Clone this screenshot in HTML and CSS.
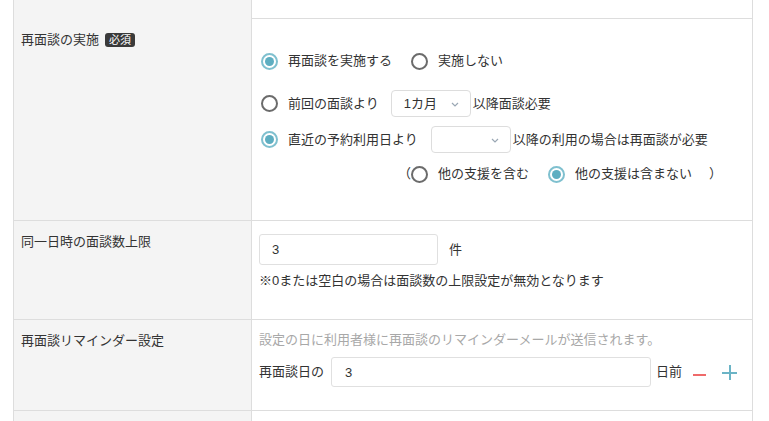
FILE: index.html
```html
<!DOCTYPE html>
<html lang="ja">
<head>
  <meta charset="UTF-8" />
  <title>再面談設定</title>
  <link rel="stylesheet" href="styles.css">
</head>
<body>

<div class="setting-table">
  <div class="row row-top">
    <div class="label-cell"></div>
    <div class="value-cell"></div>
  </div>

  <div class="row">
    <div class="label-cell">
      再面談の実施<span class="badge">必須</span>
    </div>
    <div class="value-cell cell-interview">
      <div class="line line-first">
        <label class="radio checked"><span class="dot"></span>再面談を実施する</label>
        <label class="radio radio-gap"><span class="dot"></span>実施しない</label>
      </div>
      <div class="line line-select">
        <label class="radio"><span class="dot"></span>前回の面談より</label>
        <div class="select select-a">1カ月
          <svg class="chevron" width="8" height="5" viewBox="0 0 8 5"><path d="M1 1l3 3 3-3" fill="none" stroke="#9aa7b4" stroke-width="1.2"/></svg>
        </div>
        <span class="after">以降面談必要</span>
      </div>
      <div class="line line-select line-near">
        <label class="radio checked"><span class="dot"></span>直近の予約利用日より</label>
        <div class="select select-b">
          <svg class="chevron" width="8" height="5" viewBox="0 0 8 5"><path d="M1 1l3 3 3-3" fill="none" stroke="#9aa7b4" stroke-width="1.2"/></svg>
        </div>
        <span class="after">以降の利用の場合は再面談が必要</span>
      </div>
      <div class="line line-sub">
        <span class="paren">（</span>
        <label class="radio"><span class="dot"></span>他の支援を含む</label>
        <label class="radio checked radio-gap"><span class="dot"></span>他の支援は含まない</label>
        <span class="paren paren-close">）</span>
      </div>
    </div>
  </div>

  <div class="row">
    <div class="label-cell">同一日時の面談数上限</div>
    <div class="value-cell cell-limit">
      <div class="line">
        <input class="text-input input-limit" type="text" value="3">
        <span class="unit">件</span>
      </div>
      <p class="note">※0または空白の場合は面談数の上限設定が無効となります</p>
    </div>
  </div>

  <div class="row">
    <div class="label-cell">再面談リマインダー設定</div>
    <div class="value-cell cell-reminder">
      <p class="help">設定の日に利用者様に再面談のリマインダーメールが送信されます。</p>
      <div class="line">
        <span class="before">再面談日の</span>
        <input class="text-input input-days" type="text" value="3">
        <span class="unit-days">日前</span>
        <span class="minus"></span>
        <span class="plus"></span>
      </div>
    </div>
  </div>

  <div class="row row-bottom">
    <div class="label-cell"></div>
    <div class="value-cell"></div>
  </div>
</div>

</body>
</html>
```

FILE: styles.css
```css
body {
  margin: 0;
  background-color: #ffffff;
  font-family: 'Liberation Sans', 'Noto Sans CJK JP', sans-serif;
  font-size: 13px;
  line-height: 20px;
  color: #333333;
}

.setting-table {
  margin-left: 13px;
  width: 738px;
  border-left: 1px solid #dddddd;
  border-right: 1px solid #dddddd;
}

.row {
  display: grid;
  grid-template-columns: 238px 1fr;
  border-bottom: 1px solid #dddddd;
}

.row-top {
  height: 18px;
}

.row-bottom {
  height: 20px;
  border-bottom: none;
}

.label-cell {
  background-color: #f4f4f4;
  border-right: 1px solid #dddddd;
  padding: 11px 7px;
  display: flex;
  align-items: flex-start;
}

.value-cell {
  padding: 0 7px;
}

.badge {
  display: inline-block;
  margin-left: 6px;
  margin-top: 3px;
  padding: 0 4px;
  height: 14px;
  line-height: 14px;
  font-size: 11px;
  color: #ffffff;
  background-color: #3a3a3a;
  border-radius: 3px;
}

.line {
  display: flex;
  align-items: center;
}

.cell-interview {
  padding-top: 32px;
  padding-bottom: 36px;
}

.line-select {
  margin-top: 19px;
}

.line-near {
  margin-top: 9px;
}

.line-sub {
  margin-top: 11px;
  padding-left: 139px;
}

.radio {
  display: inline-flex;
  align-items: center;
  gap: 10px;
  margin-left: 2px;
  cursor: pointer;
}

.radio-gap {
  margin-left: 19px;
}

.dot {
  box-sizing: border-box;
  width: 17px;
  height: 17px;
  border: 2px solid #6b6b6b;
  border-radius: 50%;
  display: inline-flex;
  align-items: center;
  justify-content: center;
}

.radio.checked .dot {
  border-color: #7fc0cf;
}

.radio.checked .dot::after {
  content: "";
  width: 9px;
  height: 9px;
  border-radius: 50%;
  background-color: #5eaec1;
}

.select {
  box-sizing: border-box;
  position: relative;
  width: 80px;
  height: 27px;
  line-height: 25px;
  padding-left: 12px;
  border: 1px solid #dddddd;
  border-radius: 4px;
  background-color: #ffffff;
}

.select-a {
  margin-left: 12px;
}

.select-b {
  margin-left: 13px;
}

.chevron {
  position: absolute;
  right: 11px;
  top: 11px;
}

.after {
  margin-left: 2px;
}

.paren {
  width: 13px;
}

.line-sub .radio {
  margin-left: 0;
}

.line-sub .radio-gap {
  margin-left: 19px;
}

.paren-close {
  margin-left: 17px;
}

.text-input {
  box-sizing: border-box;
  border: 1px solid #e0e0e0;
  border-radius: 3px;
  font-family: 'Liberation Sans', 'Noto Sans CJK JP', sans-serif;
  font-size: 13px;
  color: #333333;
  outline: none;
}

.cell-limit {
  padding-top: 13px;
  padding-bottom: 28px;
}

.input-limit {
  width: 179px;
  height: 31px;
  padding-left: 12px;
}

.unit {
  margin-left: 11px;
}

.note {
  margin: 6px 0 0;
}

.cell-reminder {
  padding-top: 10px;
  padding-bottom: 23px;
}

.help {
  margin: 0 0 7px;
  color: #a8a8a8;
}

.input-days {
  margin-left: 7px;
  width: 320px;
  height: 30px;
  padding-left: 13px;
}

.unit-days {
  margin-left: 5px;
}

.minus {
  margin-left: 11px;
  width: 13px;
  height: 2px;
  margin-top: 5px;
  background-color: #ef6a6a;
}

.plus {
  position: relative;
  margin-left: 16px;
  width: 15px;
  height: 15px;
}

.plus::before,
.plus::after {
  content: "";
  position: absolute;
  background-color: #6bb4c6;
}

.plus::before {
  left: 0;
  top: 7px;
  width: 15px;
  height: 2px;
}

.plus::after {
  left: 7px;
  top: 0;
  width: 2px;
  height: 15px;
}
```
